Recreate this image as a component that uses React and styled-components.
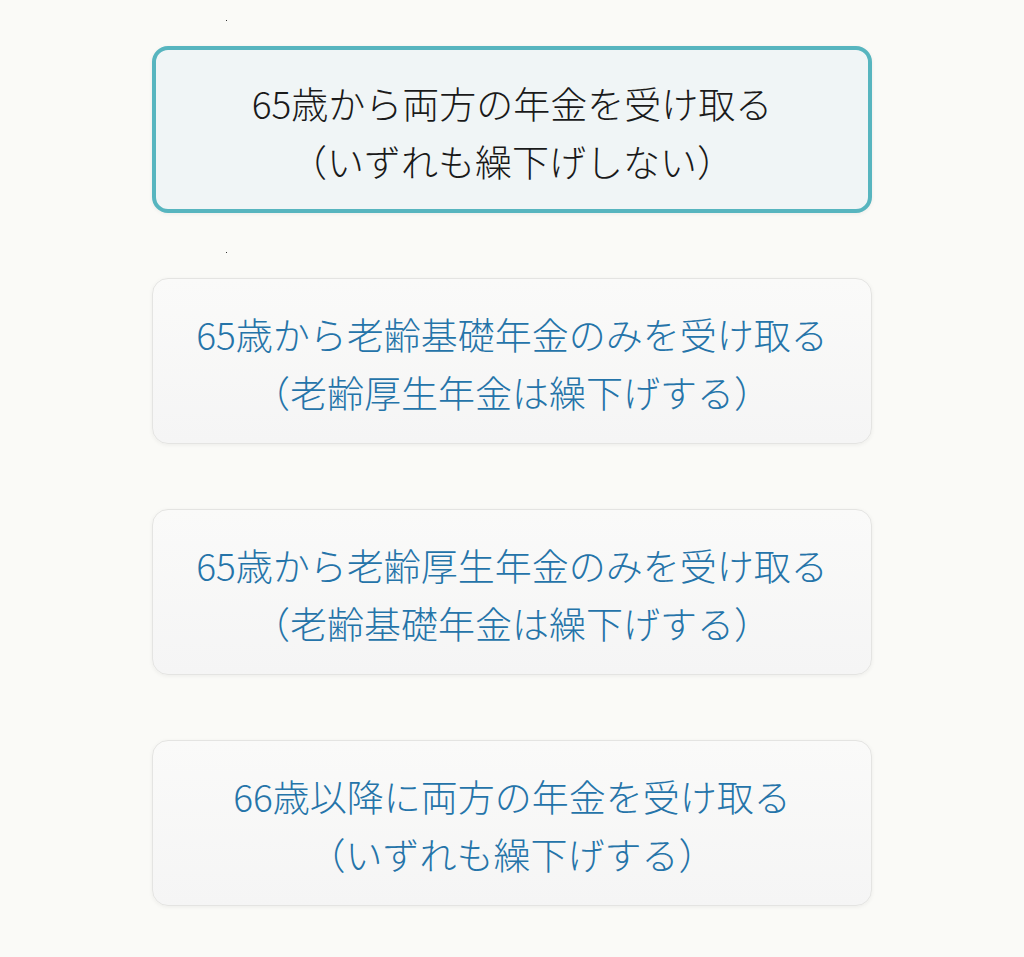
import React from 'react';
import styled, { createGlobalStyle } from 'styled-components';

const options = [
  { id: 'both-65', lines: ['65歳から両方の年金を受け取る', '（いずれも繰下げしない）'], marker: true },
  { id: 'basic-65', lines: ['65歳から老齢基礎年金のみを受け取る', '（老齢厚生年金は繰下げする）'], marker: true },
  { id: 'employee-65', lines: ['65歳から老齢厚生年金のみを受け取る', '（老齢基礎年金は繰下げする）'] },
  { id: 'both-66', lines: ['66歳以降に両方の年金を受け取る', '（いずれも繰下げする）'] },
];

const App = () => {
  const selected = 'both-65';

  return (
    <>
      <GlobalStyle />
      <Page>
        <OptionList>
          {options.map((option) => (
            <Item key={option.id}>
              <Marker $visible={option.marker} />
              <OptionCard type="button" $selected={option.id === selected}>
                {option.lines.map((line) => (
                  <Line key={line}>{line}</Line>
                ))}
              </OptionCard>
            </Item>
          ))}
        </OptionList>
      </Page>
    </>
  );
};

// Styled Components
const GlobalStyle = createGlobalStyle`
  body {
    margin: 0;
    background-color: #fafaf7;
    font-family: "Noto Sans CJK JP", "Noto Sans", sans-serif;
  }
`;

const Page = styled.main`
  min-height: 957px;
  padding-top: 20px;
  box-sizing: border-box;
`;

const OptionList = styled.div`
  width: 720px;
  margin: 0 auto;
  display: flex;
  flex-direction: column;
  gap: 39px;
`;

const Item = styled.div`
  display: flex;
  flex-direction: column;
`;

const Marker = styled.span`
  width: 1px;
  height: 1px;
  margin: 0 0 25px 74px;
  background-color: ${({ $visible }) => ($visible ? '#333' : 'transparent')};
`;

const OptionCard = styled.button`
  display: flex;
  flex-direction: column;
  align-items: center;
  width: 100%;
  box-sizing: border-box;
  padding: ${({ $selected }) => ($selected ? '24px 20px 19px' : '26px 20px 22px')};
  border-radius: 16px;
  border: ${({ $selected }) => ($selected ? '4px solid #57b5bf' : '1px solid #e4e4e2')};
  background: ${({ $selected }) =>
    $selected ? '#f0f5f6' : 'linear-gradient(180deg, #fafaf9 0%, #f5f5f5 100%)'};
  box-shadow: 0 1px 4px rgba(0, 0, 0, 0.06);
  color: ${({ $selected }) => ($selected ? '#1a1a1a' : '#2574a9')};
  font-family: inherit;
  cursor: pointer;
`;

const Line = styled.span`
  font-size: 37px;
  line-height: 58px;
  font-weight: 300;
  white-space: nowrap;
`;

export default App;
